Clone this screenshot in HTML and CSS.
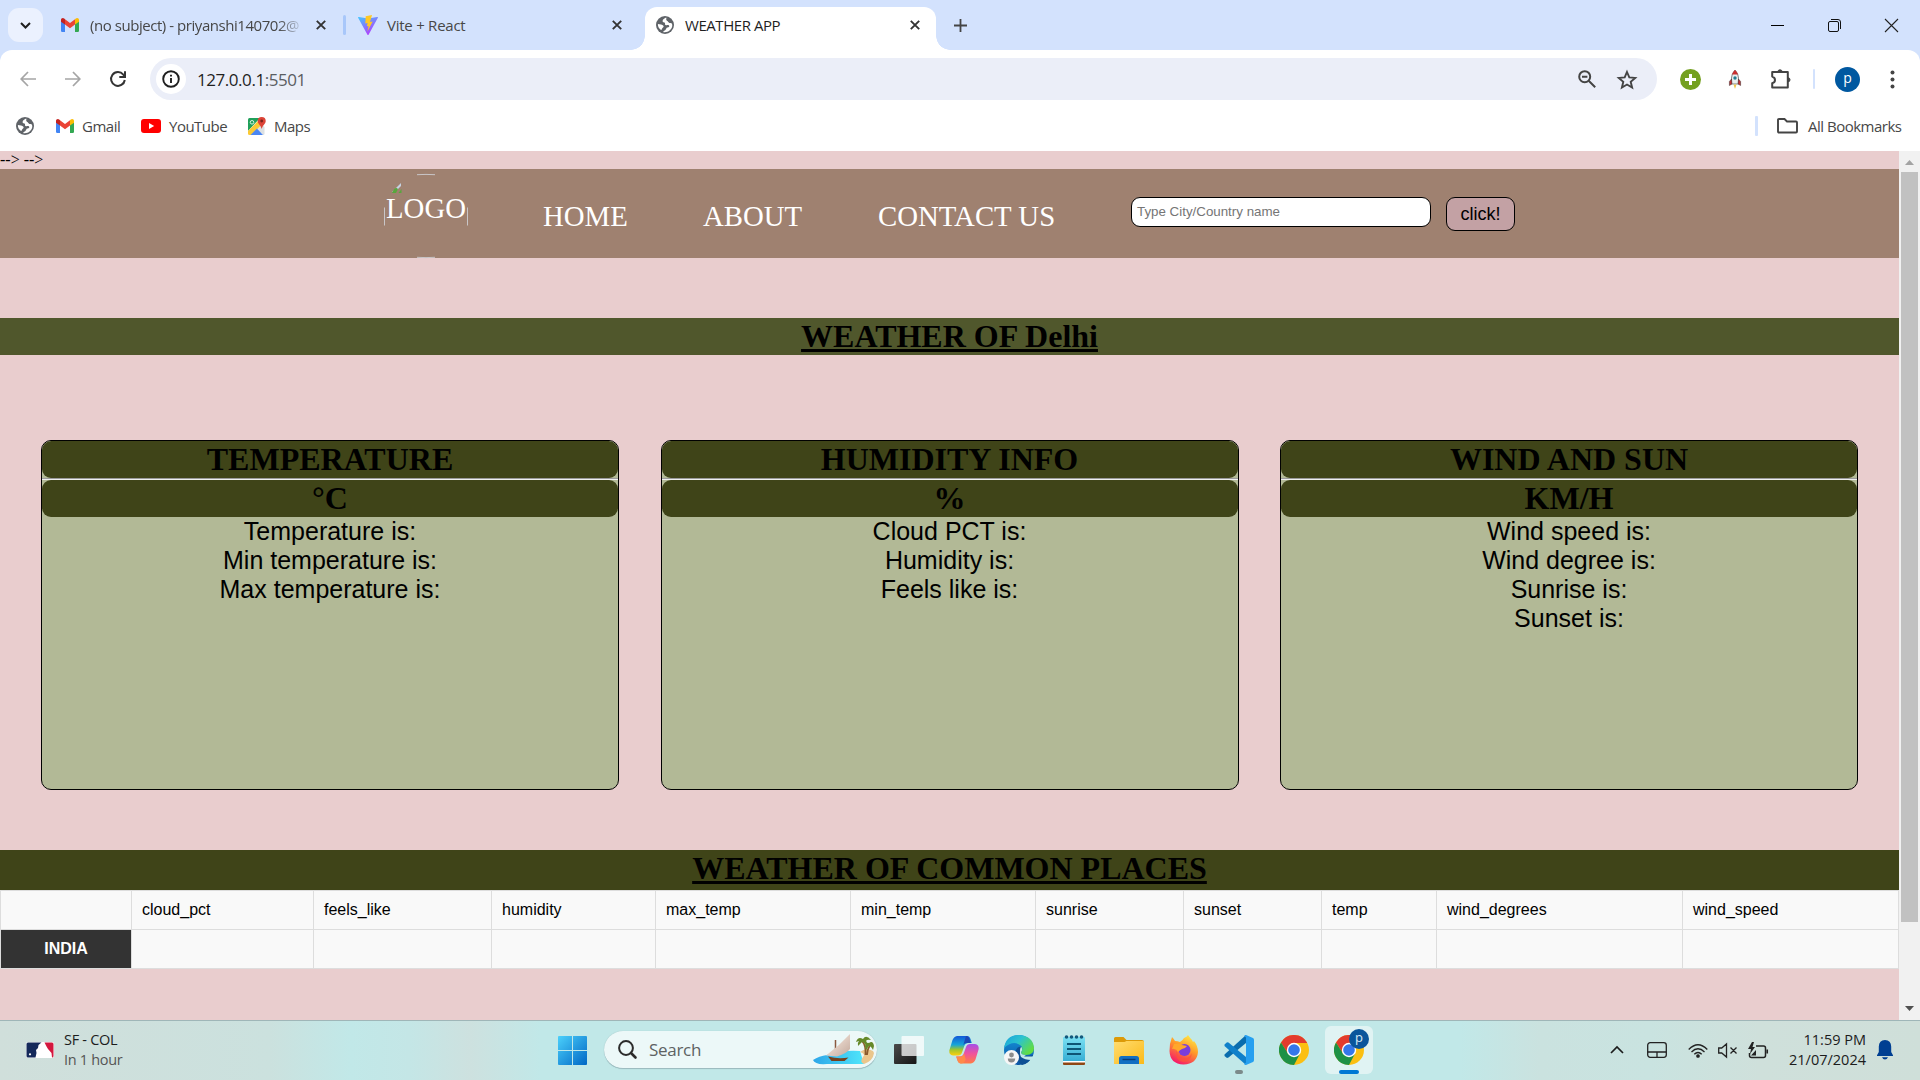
FILE: index.html
```html
<!DOCTYPE html>
<html lang="en">
<head>
<meta charset="utf-8">
<title>WEATHER APP</title>
<link rel="stylesheet" href="styles.css">
</head>
<body>
<svg class="defs" width="0" height="0" aria-hidden="true">
  <defs>
    <linearGradient id="win" x1="0" y1="0" x2="1" y2="1"><stop offset="0" stop-color="#4bd0fb"/><stop offset="1" stop-color="#0067c5"/></linearGradient>
    <linearGradient id="vite" x1="0" y1="0" x2=".6" y2="1"><stop offset="0" stop-color="#41c8ff"/><stop offset="1" stop-color="#b63cfe"/></linearGradient>
    <linearGradient id="copA" x1="0" y1="0" x2="0" y2="1"><stop offset="0" stop-color="#1258d8"/><stop offset=".45" stop-color="#16a5d8"/><stop offset=".7" stop-color="#9fc52c"/><stop offset="1" stop-color="#ffcf0c"/></linearGradient>
    <linearGradient id="copB" x1="0" y1="0" x2="0" y2="1"><stop offset="0" stop-color="#a54fe8"/><stop offset=".5" stop-color="#f0539c"/><stop offset="1" stop-color="#ff7d43"/></linearGradient>
    <linearGradient id="edgeA" x1="0" y1="0" x2="1" y2=".6"><stop offset="0" stop-color="#16a0dc"/><stop offset=".5" stop-color="#2cc3cf"/><stop offset="1" stop-color="#62dd42"/></linearGradient>
    <linearGradient id="edgeB" x1="0" y1="0" x2="0" y2="1"><stop offset="0" stop-color="#1595dc"/><stop offset="1" stop-color="#0c55a5"/></linearGradient>
    <linearGradient id="fold" x1="0" y1="0" x2="1" y2="1"><stop offset="0" stop-color="#ffdc70"/><stop offset="1" stop-color="#fbba18"/></linearGradient>
    <linearGradient id="note" x1="0" y1="0" x2="0" y2="1"><stop offset="0" stop-color="#7be0f3"/><stop offset="1" stop-color="#37aed4"/></linearGradient>
    <linearGradient id="fox" x1=".8" y1="0" x2=".3" y2="1"><stop offset="0" stop-color="#fff04a"/><stop offset=".45" stop-color="#ff9a28"/><stop offset="1" stop-color="#f5156c"/></linearGradient>
    <linearGradient id="sea" x1="0" y1="0" x2="1" y2="0"><stop offset="0" stop-color="#2ea6e8"/><stop offset="1" stop-color="#4fe6fb"/></linearGradient>
    <linearGradient id="dark" x1="0" y1="0" x2="1" y2="1"><stop offset="0" stop-color="#4a4a4a"/><stop offset="1" stop-color="#151515"/></linearGradient>
    <linearGradient id="sail" x1="0" y1="0" x2="1" y2="1"><stop offset="0" stop-color="#fff3ea"/><stop offset="1" stop-color="#c3a99c"/></linearGradient>
    <symbol id="gmail" viewBox="0 0 18 14">
      <path d="M0 2v10.800Q0 14 1.200 14H4V5.500L0 2z" fill="#4285f4"/>
      <path d="M18 2v10.800Q18 14 16.800 14H14V5.500L18 2z" fill="#34a853"/>
      <path d="M4 1.200v5.400L9 10.300l5-3.700V1.200L9 5z" fill="#ea4335"/>
      <path d="M0 2C0 .2 2 -.5 3.200.6L4 1.200v5.400L0 3.800z" fill="#c5221f"/>
      <path d="M18 2c0-1.800-2-2.500-3.200-1.400L14 1.200v5.400l4-2.800z" fill="#fbbc04"/>
    </symbol>
    <symbol id="globe" viewBox="0 0 18 18">
      <circle cx="9" cy="9" r="9" fill="#5f6368"/>
      <path d="M9.500 1.800C8 3 6.500 3.300 6.600 5.200c.1 1.200 1.600.7 2.300 1.600.5.800-.4 1.700.6 2.200 1.400.5 2.600-.4 3.500.6.900 1.200-.4 2-1.500 2-1.500.1-1 1.800-2.300 2.600-.8.500-1.700.7-2.200 1.900 4.300 1 9-1.900 9.300-6.500C16.300 7 15 7.200 13.800 7.100c-1.400-.1-1.200-1.600-2.400-2C10.200 4.700 9.700 3 11.400 2z" fill="#fff"/>
      <path d="M1.900 8c2 .2 4.600.5 5.500 1.800.7 1-.2 1.700-.9 2.200-.7.500-.3 1.800-1.500 1.900C3 12.800 1.700 10.500 1.900 8z" fill="#fff"/>
      <path d="M10.500 2.400l2 3.200 2.900.6" stroke="#5f6368" stroke-width="1" fill="none"/>
    </symbol>
    <symbol id="cross" viewBox="0 0 10 10"><path d="M.8.800l8.400 8.400M9.200.8L.8 9.200" stroke="#333" stroke-width="1.900" fill="none"/></symbol>
    <symbol id="chrome" viewBox="0 0 30 30">
      <circle cx="15" cy="15" r="15" fill="#fbbf12"/>
      <path d="M2 7.500A15 15 0 0 1 28 7.500L28 8H15L9 18.500z" fill="#e33b2e"/>
      <path d="M2 7.500A15 15 0 0 0 15 30L21.100 18.500 15 21 9 18.500z" fill="#1e9146"/>
      <circle cx="15" cy="15" r="7.200" fill="#fff"/><circle cx="15" cy="15" r="5.800" fill="#3577ea"/>
    </symbol>
  </defs>
</svg>

<header class="browser">
  <div class="tabstrip">
    <button class="tab-search"><svg width="11" height="7" viewBox="0 0 11 7"><path d="M1 1l4.500 4.500L10 1" fill="none" stroke="#1f1f1f" stroke-width="2"/></svg></button>
    <div class="tab tab-mail"><svg width="18" height="14"><use href="#gmail"/></svg><span class="label fade">(no subject) - priyanshi140702@</span><svg class="close" width="10" height="10"><use href="#cross"/></svg></div>
    <i class="tab-sep"></i>
    <div class="tab tab-vite">
      <svg width="20" height="20" viewBox="0 0 20 20"><path d="M0 2.500L9.300 19.500q.7 1 1.400 0L20 2.500q0-.7-.8-.5L10 3.600.8 2Q0 1.800 0 2.500z" fill="url(#vite)"/><path d="M14 0L7.700 1.300 7.300 8.400l2.300-.5-.7 3.400 1.700-.4-1.200 5.500 5.300-9.900-2.700.5z" fill="#ffc824"/></svg>
      <span class="label">Vite + React</span><svg class="close" width="10" height="10"><use href="#cross"/></svg></div>
    <div class="tab tab-active"><svg width="18" height="18"><use href="#globe"/></svg><span class="label">WEATHER APP</span><svg class="close" width="10" height="10"><use href="#cross"/></svg></div>
    <svg class="plus" width="13" height="13" viewBox="0 0 13 13"><path d="M6.500 0v13M0 6.500h13" stroke="#444" stroke-width="1.800"/></svg>
    <div class="window-controls">
      <svg width="13" height="13" viewBox="0 0 13 13"><path d="M0 6.500h13" stroke="#000"/></svg>
      <svg width="13" height="13" viewBox="0 0 13 13" fill="none" stroke="#111"><rect x=".5" y="2.500" width="10" height="10" rx="1.500"/><path d="M3 .5h7q2.500 0 2.500 2.500v7"/></svg>
      <svg width="13" height="13" viewBox="0 0 13 13"><path d="M0 0l13 13M13 0L0 13" stroke="#222" stroke-width="1.100"/></svg>
    </div>
  </div>
  <div class="toolbar-wrap">
    <div class="toolbar">
      <svg width="16" height="16" viewBox="0 0 16 16" fill="none" stroke="#a5a5a5" stroke-width="1.700"><path d="M16 8H1.500M8 1L1.200 8 8 15"/></svg>
      <svg width="16" height="16" viewBox="0 0 16 16" fill="none" stroke="#a5a5a5" stroke-width="1.700"><path d="M0 8h14.500M8 1l6.800 7L8 15"/></svg>
      <svg width="16" height="16" viewBox="0 0 16 16" fill="none" stroke="#333" stroke-width="2"><path d="M14.800 9A6.900 6.900 0 1 1 13.300 3.600L15 5.500"/><path d="M15 .3v5.700H9.300"/></svg>
      <div class="omnibox">
        <span class="info"><svg width="18" height="18" viewBox="0 0 18 18"><circle cx="9" cy="9" r="7.800" fill="none" stroke="#1f1f1f" stroke-width="1.900"/><path d="M9 8v5M9 4.800v1.800" stroke="#1f1f1f" stroke-width="1.900"/></svg></span>
        <span class="url">127.0.0.1<span>:5501</span></span>
        <svg class="zoomer" width="18" height="18" viewBox="0 0 18 18" fill="none" stroke="#444" stroke-width="2"><circle cx="6.700" cy="6.700" r="5.500"/><path d="M10.700 10.700l6.500 6.500M4 6.700h5.400" /></svg>
        <svg class="star" width="20" height="19" viewBox="0 0 20 19"><path d="M10 2l2.300 5.400 5.900.5-4.500 3.900 1.400 5.800L10 14.500l-5.100 3.100 1.400-5.800-4.500-3.900 5.900-.5z" fill="none" stroke="#444" stroke-width="1.900"/></svg>
      </div>
      <svg class="ext" width="21" height="21" viewBox="0 0 21 21"><circle cx="10.500" cy="10.500" r="10.500" fill="#74a01f"/><path d="M10.500 5v11M5 10.500h11" stroke="#fff" stroke-width="3"/></svg>
      <svg class="rocket" width="12" height="19" viewBox="0 0 12 19"><path d="M6 0Q9.500 3.500 9.500 8v6h-7V8Q2.500 3.500 6 0z" fill="#e9eeee" stroke="#555" stroke-width=".7"/><path d="M6 0Q8.500 2.400 9 4.500H3Q3.500 2.400 6 0z" fill="#c92f2f"/><circle cx="6" cy="8" r="1.700" fill="#247c91"/><path d="M2.500 9L.4 11.500v4L3 14zM9.500 9l2.100 2.500v4L9 14z" fill="#c42d30" stroke="#333" stroke-width=".5"/><path d="M4.500 14.500h3L6 19z" fill="#efc64c"/></svg>
      <svg class="puzzle" width="22" height="20" viewBox="0 0 22 20"><path d="M2.200 3h15.600v15.500H2.200v-4.300q2.800-.8 2.800-3.300t-2.800-3.300z" fill="none" stroke="#444" stroke-width="2" stroke-linejoin="round"/><path d="M7.800 3a2.200 2.200 0 0 1 4.400 0zM18 8.800a2 2 0 0 1 0 4z" fill="#444" stroke="#444"/></svg>
      <i class="bar-sep"></i>
      <span class="avatar">p</span>
      <svg class="dots" width="5" height="19" viewBox="0 0 5 19" fill="#444"><circle cx="2.500" cy="2.500" r="2"/><circle cx="2.500" cy="9.500" r="2"/><circle cx="2.500" cy="16.500" r="2"/></svg>
    </div>
    <nav class="bookmarks">
      <svg width="18" height="18"><use href="#globe"/></svg>
      <a class="bm bm-gmail"><svg width="18" height="14"><use href="#gmail"/></svg>Gmail</a>
      <a class="bm bm-yt"><svg width="20" height="14" viewBox="0 0 20 14"><rect width="20" height="14" rx="3" fill="#f00"/><path d="M8 4l5.200 3L8 10z" fill="#fff"/></svg>YouTube</a>
      <a class="bm bm-maps"><svg width="18" height="18" viewBox="0 0 18 18"><path d="M1.500 1H12L0 14V2.500Q0 1 1.500 1z" fill="#20a05a"/><path d="M12 5l4.500 5v6.500Q16.500 18 15 18L8 10z" fill="#dce0e2"/><path d="M1.500 18Q0 18 0 16.500V14L11 3l3 4L3.500 18z" fill="#fbc934"/><path d="M2.500 18L9 11.500 15 18z" fill="#4a86f3"/><path d="M13.700 0a4 4 0 0 1 4 4c0 3-3.200 4-4 8-.8-4-4-5-4-8a4 4 0 0 1 4-4z" fill="#dc4437"/><circle cx="13.700" cy="4" r="1.400" fill="#7a231c"/><circle cx="4" cy="5.300" r="1.800" fill="none" stroke="#d9eee0" stroke-width="1"/></svg>Maps</a>
      <i class="bar-sep bm-sep"></i>
      <a class="bm bm-all"><svg width="21" height="16" viewBox="0 0 21 16"><path d="M1 13.500V2q0-1 1-1h5.500l2.500 2.500h9q1 0 1 1v9q0 1-1 1H2q-1 0-1-1z" fill="none" stroke="#444" stroke-width="1.900"/></svg>All Bookmarks</a>
    </nav>
  </div>
</header>

<div class="viewport">
  <main class="page">
    <p class="stray">--&gt; --&gt;</p>
    <nav class="nav">
      <div class="logo">
        <svg class="logo-ring" width="84" height="84" viewBox="0 0 84 84" fill="none" stroke="#c9c6c8"><path d="M33 .7q9-.6 18 0M33 83.300q9 .6 18 0M.5 33.500v18M83.500 33.500v18"/><path d="M8 18l9-9v3l-6 6z" fill="#c5d3e2" stroke="none"/><path d="M8 19q3-7 6-4l-2 4zM14.500 19l3-4v4z" fill="#58a63d" stroke="none"/></svg>
        LOGO</div>
      <a class="home">HOME</a><a class="about">ABOUT</a><a class="contact">CONTACT US</a>
      <div class="city">Type City/Country name</div>
      <button class="go">click!</button>
    </nav>
    <h1 class="title city-title">WEATHER OF Delhi</h1>
    <section class="cards">
      <article class="card"><h2>TEMPERATURE</h2><hr><h2>°C</h2><p>Temperature is:</p><p>Min temperature is:</p><p>Max temperature is:</p></article>
      <article class="card"><h2>HUMIDITY INFO</h2><hr><h2>%</h2><p>Cloud PCT is:</p><p>Humidity is:</p><p>Feels like is:</p></article>
      <article class="card"><h2>WIND AND SUN</h2><hr><h2>KM/H</h2><p>Wind speed is:</p><p>Wind degree is:</p><p>Sunrise is:</p><p>Sunset is:</p></article>
    </section>
    <h1 class="title places-title">WEATHER OF COMMON PLACES</h1>
    <table class="places">
      <colgroup><col class="c0"><col class="c1"><col class="c2"><col class="c3"><col class="c4"><col class="c5"><col class="c6"><col class="c7"><col class="c8"><col class="c9"><col class="c10"></colgroup>
      <tr><td></td><td>cloud_pct</td><td>feels_like</td><td>humidity</td><td>max_temp</td><td>min_temp</td><td>sunrise</td><td>sunset</td><td>temp</td><td>wind_degrees</td><td>wind_speed</td></tr>
      <tr><th>INDIA</th><td></td><td></td><td></td><td></td><td></td><td></td><td></td><td></td><td></td><td></td></tr>
    </table>
  </main>
  <div class="scrollbar">
    <svg width="21" height="21" viewBox="0 0 21 21"><path d="M6 14h9l-4.500-5z" fill="#a3a3a3"/></svg>
    <div class="thumb"></div>
    <svg class="down" width="21" height="21" viewBox="0 0 21 21"><path d="M6 7h9l-4.500 5z" fill="#505050"/></svg>
  </div>
</div>

<footer class="taskbar">
  <div class="widget">
    <svg width="28" height="16" viewBox="0 0 28 16"><rect width="28" height="16" rx="2" fill="#fff"/><path d="M2 .5h13.500L12.500 3l-.5 3-2 2 .5 3-1 4.500H2Q.5 15.500.5 14V2Q.5.500 2 .5z" fill="#14295a"/><path d="M18.500 .5H26q1.500 0 1.500 1.500v12q0 1.500-1.500 1.500L25.500 11 22 7l-1.500-2.500z" fill="#d3173e"/><circle cx="4" cy="12.300" r="1.100" fill="#fff"/></svg>
    <div class="widget-text"><b>SF - COL</b><span>In 1 hour</span></div>
  </div>
  <div class="apps">
    <svg width="29" height="29" viewBox="0 0 29 29" fill="url(#win)"><path d="M1 0h13v14H0V1q0-1 1-1zM15 0h13q1 0 1 1v13H15zM0 15h14v14H1q-1 0-1-1zM15 15h14v13q0 1-1 1H15z"/></svg>
    <div class="search">
      <svg width="19" height="19" viewBox="0 0 19 19" fill="none" stroke="#2b2b2b"><circle cx="8" cy="8" r="6.900" stroke-width="2"/><path d="M13 13l4.500 4.500" stroke-width="2.600" stroke-linecap="round"/></svg>
      <span>Search</span>
      <svg class="art" width="62" height="31" viewBox="0 0 62 31"><path d="M0 26Q6 22 14 21q12-5 33-4l4 13H14Q2 31 0 26z" fill="url(#sea)"/><path d="M47 18q6-5 13-1l1 2q-1 8-10 11-5-2-1-7 3-3-3-5z" fill="#eac68c"/><path d="M22.500 18V6" stroke="#8a5a40" stroke-width="1.500"/><path d="M37 0v15q-4 5-13 7.500l-11-1Q26 12 37 0z" fill="url(#sail)"/><path d="M15 22.500l3.500 4.500h13l4-3.500q-10 2-20.500-1z" fill="#75421f"/><path d="M49 7q4 4 3.500 14M57 11q-3 5-3 10" stroke="#8a5a2c" stroke-width="1.700" fill="none"/><path d="M43 8q2-6 7-3 3-5 8 1-4-1-5 1 2 2 0 5-2-4-4-4-2 2-4 4-1-3 1-5zM52 12q1-4 4-3 4-3 5 3l-1 4q-2-4-4-4-2 2-2 4-2-1-2-4z" fill="#65892a"/></svg>
    </div>
    <svg class="taskview" width="30" height="28" viewBox="0 0 30 28"><rect y="8" width="22.500" height="20" rx="1" fill="url(#dark)"/><rect x="7.500" y="0" width="22.500" height="20" rx="1" fill="#fff" fill-opacity=".75"/></svg>
    <svg class="copilot" width="30" height="28" viewBox="0 0 30 28"><path d="M8 0h10q2.500 0 3.500 3l1.300 4h-3.500q-3 0-4 3L13 16.500q-1 3-4 3H4Q0 19 .3 14.500L3.500 4Q5 .5 8 0z" fill="url(#copA)"/><path d="M17 0q2.500 0 3.500 3l1.300 4h-3.500q-3 0-4 2z" fill="#1d46b5"/><path d="M22 27.500H12q-2.500 0-3.500-3L7.200 20.500h3.500q3 0 4-3L17 11q1-3 4-3h5q4 .5 3.700 5L26.500 23.500Q25 27 22 27.500z" fill="url(#copB)"/><path d="M12 27.500q-2.500 0-3.500-3L7.200 20.500h4q3 0 4-3l1.500 6q-1.700 4-4.700 4z" fill="#ff8a49"/></svg>
    <svg class="edge" width="30" height="30" viewBox="0 0 30 30"><circle cx="15" cy="15" r="15" fill="url(#edgeB)"/><path d="M0 13Q2 0 15 0q14 1 15 13 0 7-8 7-6 0-5-3 3-5-1-7Q9 5 0 13z" fill="url(#edgeA)"/><path d="M12 15q2-4 5-3 2 2 0 5 0 4 6 4 3 0 6-1-4 9-11 10-7-4-6-15z" fill="#0d4f94"/><path d="M17 12q2 2 0 5-.5 3 4 4.500h8.500L31 19v3l-4 3q-6 0-10-3-2-4 0-10z" fill="#c2e9e9"/><path d="M17 12q2 2 0 5-.5 3 5 3l-3 2q-5-3-2-10z" fill="#c2e9e9"/><circle cx="7.500" cy="22.500" r="7.500" fill="#f6f6f6"/><circle cx="7.500" cy="20" r="2.400" fill="#8c8c8c"/><path d="M3.800 23.500h7.400q0 4-3.700 4t-3.700-4z" fill="#8c8c8c"/></svg>
    <svg class="notepad" width="22" height="30" viewBox="0 0 22 30"><rect y="26" width="22" height="4" rx="1" fill="#8e4714"/><rect y="25" width="22" height="2.500" fill="#fff"/><path d="M1 2h20q1 0 1 1v23H0V3q0-1 1-1z" fill="url(#note)"/><path d="M4 9h14M4 14h14M4 19h14" stroke="#0e5575" stroke-width="2"/><g fill="#14597c"><circle cx="3.500" cy="2" r="1.800"/><circle cx="8.500" cy="2" r="1.800"/><circle cx="13.500" cy="2" r="1.800"/><circle cx="18.500" cy="2" r="1.800"/></g></svg>
    <svg class="folder" width="30" height="27" viewBox="0 0 30 27"><path d="M1.500 0h8l3 3H28q2 0 2 2v5H0V1.500Q0 0 1.500 0z" fill="#dc9a08"/><path d="M0 5h10.500l2-1H29q1 0 1 1v22H0z" fill="url(#fold)"/><path d="M5 27v-5.500Q5 19 7.500 19h15q2.500 0 2.500 2.500V27z" fill="#126fc2"/><path d="M8.500 22.500h13" stroke="#073c78" stroke-width="1.400"/></svg>
    <svg class="firefox" width="29" height="30" viewBox="0 0 29 30"><path d="M3 2q2 2 3 4 3 0 5 1 3-2 4-4 3-1 4-3 2 3 4 5l1 2 1-1q4 5 4 11Q28 29 14.500 29.500 1 29 .5 16 .5 8 3 2z" fill="url(#fox)"/><circle cx="15.500" cy="15" r="6" fill="#7a3ddb"/><path d="M5 9q6-1 8 1l5 1q-2 3-5 3-2 1-4 3Q6 13 3 14z" fill="#ffa72b"/><path d="M8 14q-1 9 7 9 6 0 8-5-1 9-9 9Q5 25 8 14z" fill="#ff5338" fill-opacity=".7"/></svg>
    <svg class="vscode" width="30" height="39" viewBox="0 0 30 39"><path d="M22 0v8L4.500 22.500 3 23 .5 21V19.500z" fill="#0a6cad"/><path d="M.5 9.500L3 7.200l1.500.3L22 22v8L.5 11z" fill="#0f80ca"/><path d="M22 0l7 3q1 .5 1 2v20q0 1.500-1 2l-7 3q-1 .2-2-1l2-1.500V2.500L20 1q1-1 2-1z" fill="#26a0f0"/><rect x="11" y="35" width="8" height="4" rx="2" fill="#7b8a8a"/></svg>
    <svg class="chrome" width="30" height="30"><use href="#chrome"/></svg>
    <div class="active-app"><svg width="30" height="30"><use href="#chrome"/></svg><span class="badge">p</span><i></i></div>
  </div>
  <div class="tray">
    <svg width="14" height="8" viewBox="0 0 14 8"><path d="M1 7l6-6 6 6" fill="none" stroke="#1c1c1c" stroke-width="1.700"/></svg>
    <svg class="pad" width="20" height="16" viewBox="0 0 20 16" fill="none" stroke="#222" stroke-width="1.300"><rect x=".7" y=".7" width="18.600" height="14.600" rx="2.500"/><path d="M.7 10h18.600M10 10v5"/></svg>
    <svg class="wifi" width="20" height="15" viewBox="0 0 20 15" fill="none" stroke="#222" stroke-width="1.300"><path d="M.7 6.500q9.300-9.500 18.600 0M3.500 9q6.500-6.500 13 0M6.300 11.300q3.700-3.700 7.400 0"/><circle cx="10" cy="13" r="1.200" fill="#222"/></svg>
    <svg class="vol" width="20" height="15" viewBox="0 0 20 15" fill="none" stroke="#222" stroke-width="1.300"><path d="M.7 5h3L8.500 1v13l-4.800-4h-3zM12.500 4.500l6 6M18.500 4.500l-6 6"/></svg>
    <svg class="battery" width="21" height="17" viewBox="0 0 21 17" fill="none" stroke="#222" stroke-width="1.300"><path d="M8 4h7.500q2 0 2 2v7.500q0 2-2 2h-12q-2 0-2-2V11M19.300 7.500v4" stroke-width="1.500"/><path d="M4 0L0 7h3l-1 5 5-7H4.500L6 0zM3 13.500L8 8v5.500z" fill="#222" stroke="none"/></svg>
    <div class="clock"><span>11:59 PM</span><span>21/07/2024</span></div>
    <svg class="bell" width="16" height="20" viewBox="0 0 16 20" fill="#003f92"><path d="M8 0q6 .3 6.200 6.500V12l1.800 3.200v.8H0v-.8L1.800 12V6.500Q2 .300 8 0zM5 17.300h6q-1 2.200-3 2.200t-3-2.200z"/></svg>
  </div>
</footer>
</body>
</html>
```
FILE: styles.css
```css
* { box-sizing: border-box; margin: 0; padding: 0; }
body { width: 1920px; height: 1080px; overflow: hidden; display: flex; flex-direction: column; font-family: "Open Sans", sans-serif; background: #fff; }
svg { display: block; flex: none; overflow: visible; }
.defs { position: absolute; }
button { border: 0; font: inherit; }

/* browser chrome */
.browser { height: 151px; flex: none; background: #d3e2fd; }
.tabstrip { height: 50px; display: flex; align-items: center; }
.tab-search { width: 35px; height: 34px; margin-left: 8px; border-radius: 11px; background: #ebf1fe; display: flex; align-items: center; justify-content: center; }
.tab { display: flex; align-items: center; font-size: 15px; color: #474747; white-space: nowrap; letter-spacing: -.25px; }
.tab .close { margin-left: auto; }
.tab-mail { width: 265px; margin-left: 18px; letter-spacing: -.45px; }
.label { margin-left: 11px; line-height: 20px; }
.fade { width: 214px; -webkit-mask-image: linear-gradient(90deg, #000 88%, transparent); mask-image: linear-gradient(90deg, #000 88%, transparent); }
.tab-sep { width: 3px; height: 20px; margin-left: 17px; border-radius: 2px; background: #a8c7fa; }
.tab-vite { width: 264px; margin-left: 12px; }
.tab-vite .label { margin-left: 9px; }
.tab-active { position: relative; align-self: flex-end; width: 291px; height: 43px; margin-left: 23px; padding: 0 16px 7px 11px; border-radius: 12px 12px 0 0; background: #fff; color: #1f1f1f; letter-spacing: -.45px; }
.tab-active::before, .tab-active::after { content: ""; position: absolute; bottom: 0; width: 14px; height: 14px; }
.tab-active::before { left: -14px; background: radial-gradient(circle at 0 0, transparent 13.500px, #fff 14px); }
.tab-active::after { right: -14px; background: radial-gradient(circle at 100% 0, transparent 13.500px, #fff 14px); }
.plus { margin-left: 18px; }
.window-controls { display: flex; gap: 44px; margin-left: auto; margin-right: 22px; }
.toolbar-wrap { height: 101px; background: #fff; border-radius: 12px 12px 0 0; }
.toolbar { height: 58px; display: flex; align-items: center; padding-left: 20px; gap: 29px; }
.omnibox { width: 1507px; height: 42px; margin-left: -5px; border-radius: 21px; background: #ebeef8; display: flex; align-items: center; padding: 0 20px 0 6px; }
.info { width: 30px; height: 30px; border-radius: 50%; background: #fff; display: flex; align-items: center; justify-content: center; }
.url { margin-left: 11px; font-size: 17px; color: #1f1f1f; letter-spacing: -.45px; }
.url span { color: #5a5d62; }
.zoomer { margin-left: auto; }
.star { margin-left: 21px; }
.ext { margin-left: -6px; }
.rocket { margin-left: -1px; }
.puzzle { margin-left: 0; }
.bar-sep { width: 2px; height: 20px; margin-left: -8px; border-radius: 1px; background: #d3e2fd; }
.avatar { width: 25px; height: 25px; margin-left: -9px; border-radius: 50%; background: #0058a0; color: #fff; font-size: 14px; line-height: 22px; text-align: center; }
.dots { margin-left: 1px; }
.bookmarks { height: 36px; display: flex; align-items: center; padding-left: 16px; color: #474747; font-size: 15px; line-height: 20px; padding-bottom: 1px; letter-spacing: -.5px; }
.bm { display: flex; align-items: center; gap: 8px; }
.bm-gmail { width: 85px; margin-left: 22px; }
.bm-yt { width: 107px; }
.bm-maps { gap: 8px; }
.bm-sep { width: 3px; margin-left: auto; }
.bm-all { width: 124px; margin: 0 19px 0 19px; gap: 10px; white-space: nowrap; }

/* page */
.viewport { height: 869px; flex: none; display: flex; }
.page { width: 1899px; overflow: hidden; background: #e9cdce; font-family: "Liberation Serif", serif; }
.stray { height: 18px; font-size: 16px; line-height: 18px; }
.nav { height: 89px; display: flex; background: #9f8170; color: #fff; font-size: 28.800px; line-height: 33px; white-space: nowrap; }
.logo { position: relative; width: 84px; height: 84px; margin: 5px 0 0 384px; padding: 18px 0 0 2px; }
.logo-ring { position: absolute; left: 0; top: 0; }
.nav a { margin-top: 31px; }
.home { width: 160px; margin-left: 75px; }
.about { width: 175px; }
.contact { width: 253px; }
.city { width: 300px; height: 30px; margin-top: 28px; padding-left: 5px; border: 1px solid #000; border-radius: 9px; background: #fff; color: #757575; font: 13.330px/27px "Liberation Sans", sans-serif; }
.go { width: 69px; height: 34px; margin: 28px 0 0 15px; border: 1px solid #000; border-radius: 9px; background: #c3a1a4; color: #000; font: 18px/30px "Liberation Sans", sans-serif; }
.title { font-size: 32px; line-height: 37px; text-align: center; text-decoration: underline; }
.city-title { height: 37px; margin-top: 60px; background: #50572c; }
.cards { display: flex; justify-content: space-between; padding: 0 41px; margin-top: 85px; }
.card { width: 578px; height: 350px; border: 1px solid #000; border-radius: 10px; background: #b2b996; overflow: hidden; text-align: center; }
.card h2 { height: 37px; border-radius: 9px; background: #3f4418; font-size: 32px; line-height: 37px; }
.card hr { height: 2px; border: 0; border-top: 1px solid #9a9a9a; border-bottom: 1px solid #eee; }
.card p { font: 25px/29px "Liberation Sans", sans-serif; }
.places-title { height: 40px; margin-top: 60px; background: #3f4418; }
.places { width: 1899px; table-layout: fixed; border-collapse: collapse; background: #f9f9f9; font: 16px/18px "Liberation Sans", sans-serif; }
.places td, .places th { height: 39px; padding: 0 10px; border: 1px solid #ddd; text-align: left; }
.places th { background: #333; color: #fff; text-align: center; }
.c0 { width: 131px; } .c1 { width: 182px; } .c2 { width: 178px; } .c3 { width: 164px; } .c4 { width: 195px; } .c5 { width: 185px; } .c6 { width: 148px; } .c7 { width: 138px; } .c8 { width: 115px; } .c9 { width: 246px; } .c10 { width: 216px; }
.scrollbar { width: 21px; background: #f1f1f1; }
.thumb { width: 17px; height: 750px; margin-left: 2px; background: #c1c1c1; }
.down { margin-top: 77px; }

/* taskbar */
.taskbar { height: 60px; flex: none; display: flex; align-items: center; padding-bottom: 1px; border-top: 1px solid #9fb6b8; background: linear-gradient(90deg, #d0dfdb 0, #cbe1de 270px, #c1e8e8 350px, #c4e6e6 410px, #cde1df 470px, #c1e8e8 540px, #c1e8e8 1460px, #cae2df 1540px, #c9e3e0 1650px, #cfe0db 1760px, #cfdfd9 100%); }
.widget { width: 532px; padding-left: 26px; display: flex; align-items: center; gap: 10px; }
.widget-text { display: flex; flex-direction: column; font-size: 14.500px; line-height: 20px; letter-spacing: -.3px; color: #555; }
.widget-text b { font-weight: 400; color: #1c1c1c; }
.apps { display: flex; align-items: center; margin-left: 26px; height: 58px; }
.search { width: 273px; height: 38px; margin: 0 17px; padding: 0 2px 0 14px; border-radius: 19px; background: #ecf8f8; border-bottom: 1px solid #9dbcc0; box-shadow: 0 0 1px #8fb5b8; display: flex; align-items: center; }
.search span { margin-left: 12px; font-size: 17px; color: #5d6263; letter-spacing: -.3px; }
.art { margin-left: auto; }
.copilot { margin-left: 25px; }
.edge { margin-left: 25px; }
.notepad { margin-left: 29px; }
.folder { margin-left: 29px; }
.firefox { margin-left: 25px; }
.vscode { margin: 9px 0 0 26px; }
.chrome { margin-left: 25px; }
.active-app { position: relative; width: 48px; height: 48px; margin-left: 16px; border-radius: 6px; background: #e0f3f3; display: flex; align-items: center; justify-content: center; }
.badge { position: absolute; left: 24px; top: 3px; width: 20px; height: 20px; border-radius: 50%; background: #0a559b; color: #d5e8f5; font-size: 13px; line-height: 17px; text-align: center; }
.active-app i { position: absolute; left: 14px; bottom: 0; width: 20px; height: 4px; border-radius: 2px; background: #0078d4; }
.tray { display: flex; align-items: center; margin-left: auto; margin-right: 27px; }
.pad { margin-left: 23px; }
.wifi { margin-left: 21px; }
.vol { margin-left: 10px; }
.battery { margin-left: 10px; }
.clock { width: 97px; display: flex; flex-direction: column; text-align: right; font-size: 14.500px; line-height: 20px; letter-spacing: 0; color: #1c1c1c; }
.bell { margin-left: 11px; }
```
